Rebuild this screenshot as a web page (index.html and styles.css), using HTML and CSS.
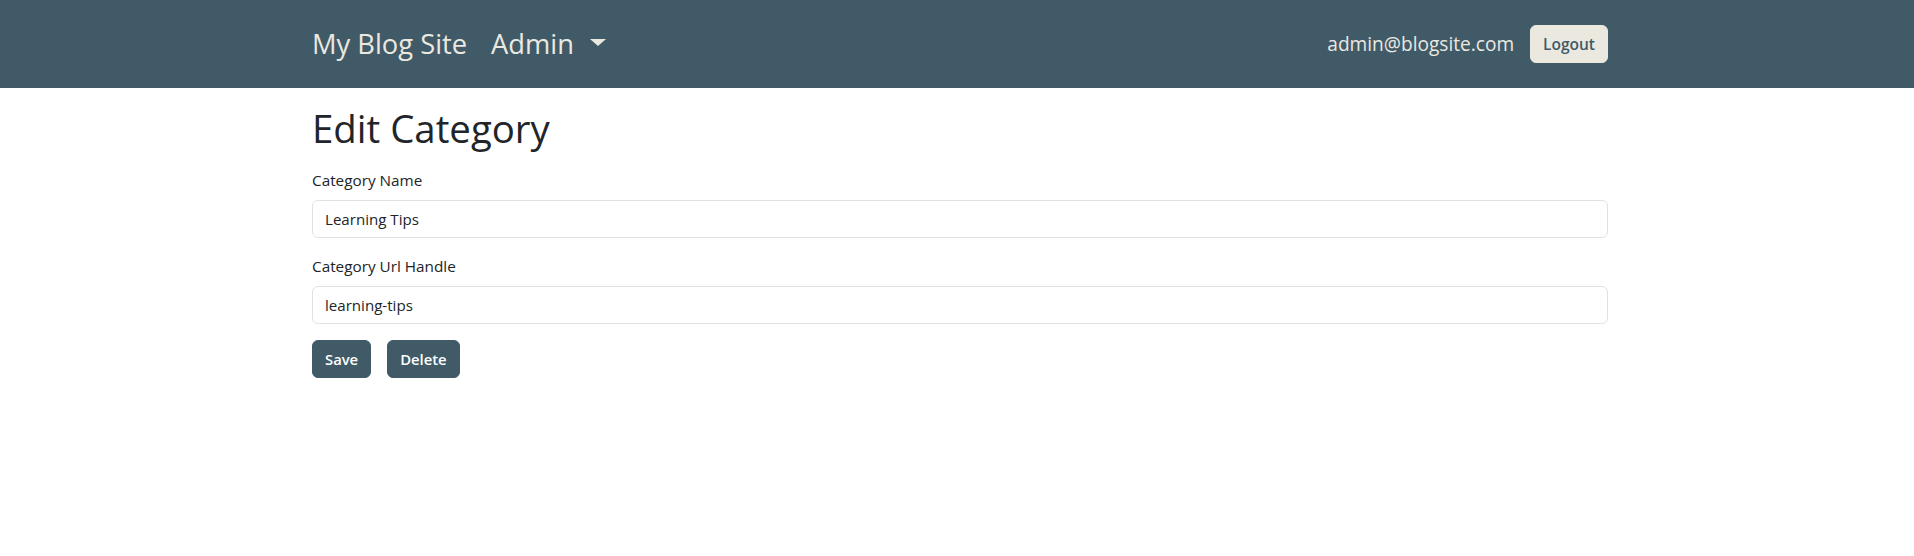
FILE: index.html
```html
<!DOCTYPE html>
<html lang="en">
<head>
<meta charset="utf-8">
<title>Edit Category</title>
<link rel="stylesheet" href="styles.css">
</head>
<body>
<nav class="navbar">
  <div class="container nav-inner">
    <div class="nav-left">
      <a class="brand" href="#">My Blog Site</a>
      <a class="nav-link dropdown" href="#">Admin<span class="caret"></span></a>
    </div>
    <div class="nav-right">
      <span class="user-email">admin@blogsite.com</span>
      <button class="btn btn-light" type="button">Logout</button>
    </div>
  </div>
</nav>
<main class="container page">
  <h1 class="title">Edit Category</h1>
  <form class="form">
    <div class="field">
      <label class="form-label" for="name">Category Name</label>
      <input class="form-control" id="name" type="text" value="Learning Tips">
    </div>
    <div class="field">
      <label class="form-label" for="handle">Category Url Handle</label>
      <input class="form-control" id="handle" type="text" value="learning-tips">
    </div>
    <div class="actions">
      <button class="btn btn-dark" type="submit">Save</button>
      <button class="btn btn-dark" type="button">Delete</button>
    </div>
  </form>
</main>
</body>
</html>
```
FILE: styles.css
```css
* { box-sizing: border-box; }
html, body { margin: 0; padding: 0; }
body {
  font-family: "Open Sans", "Noto Sans", sans-serif;
  font-size: 16px;
  line-height: 1.5;
  color: #212529;
  background: #fff;
}
.container {
  width: 1296px;
  margin-left: calc(50% - 645px);
}
.navbar {
  background: #405a68;
  height: 88px;
  display: flex;
  align-items: center;
}
.nav-inner {
  display: flex;
  align-items: center;
  justify-content: space-between;
}
.nav-left {
  display: flex;
  align-items: center;
  gap: 24px;
}
.brand, .nav-link {
  color: #ebe8e0;
  text-decoration: none;
  font-size: 27.3px;
  line-height: 36px;
}
.nav-link {
  display: flex;
  align-items: center;
}
.caret {
  display: inline-block;
  margin-left: 16px;
  width: 0;
  height: 0;
  border-left: 8px solid transparent;
  border-right: 8px solid transparent;
  border-top: 7px solid #ebe8e0;
  margin-top: -4px;
}
.nav-right {
  display: flex;
  align-items: center;
  gap: 16px;
}
.user-email {
  color: #ebe8e0;
  font-size: 19.1px;
}
.btn {
  font-family: inherit;
  font-size: 15.5px;
  line-height: 24px;
  font-weight: 600;
  padding: 6px 12px;
  border: 1px solid transparent;
  border-radius: 6px;
  cursor: pointer;
  height: 38px;
}
.btn-light {
  background: #ebe8e0;
  color: #405a68;
  border-color: #ebe8e0;
}
.btn-dark {
  background: #405a68;
  color: #fff;
  border-color: #405a68;
  font-size: 14.8px;
}
.page { padding-top: 16px; }
.title {
  font-size: 38.4px;
  font-weight: 400;
  line-height: 48px;
  margin: 0 0 16px;
}
.field { margin-bottom: 16px; }
.form-label {
  display: block;
  font-size: 15.3px;
  line-height: 24px;
  margin-bottom: 8px;
}
.form-control {
  display: block;
  width: 100%;
  height: 38px;
  padding: 6px 12px;
  font-family: inherit;
  font-size: 15.1px;
  line-height: 24px;
  color: #212529;
  background: #fff;
  border: 1px solid #dee2e6;
  border-radius: 6px;
  outline: none;
}
.actions {
  display: flex;
  gap: 16px;
}
```
